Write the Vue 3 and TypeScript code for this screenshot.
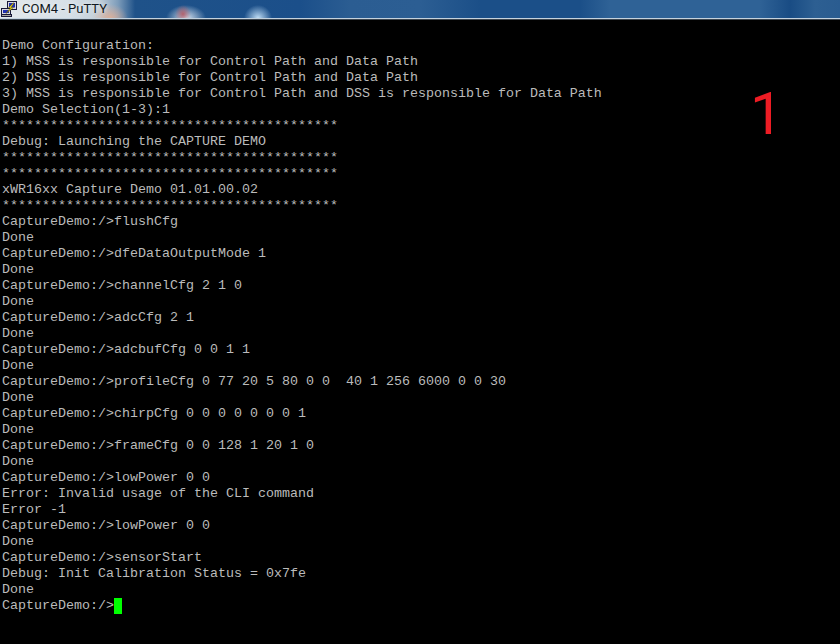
<script setup lang="ts">
const stars = '*'.repeat(42)
const lines: string[] = [
  'Demo Configuration:',
  '1) MSS is responsible for Control Path and Data Path',
  '2) DSS is responsible for Control Path and Data Path',
  '3) MSS is responsible for Control Path and DSS is responsible for Data Path',
  'Demo Selection(1-3):1',
  stars,
  'Debug: Launching the CAPTURE DEMO',
  stars,
  stars,
  'xWR16xx Capture Demo 01.01.00.02',
  stars,
  'CaptureDemo:/>flushCfg',
  'Done',
  'CaptureDemo:/>dfeDataOutputMode 1',
  'Done',
  'CaptureDemo:/>channelCfg 2 1 0',
  'Done',
  'CaptureDemo:/>adcCfg 2 1',
  'Done',
  'CaptureDemo:/>adcbufCfg 0 0 1 1',
  'Done',
  'CaptureDemo:/>profileCfg 0 77 20 5 80 0 0  40 1 256 6000 0 0 30',
  'Done',
  'CaptureDemo:/>chirpCfg 0 0 0 0 0 0 0 1',
  'Done',
  'CaptureDemo:/>frameCfg 0 0 128 1 20 1 0',
  'Done',
  'CaptureDemo:/>lowPower 0 0',
  'Error: Invalid usage of the CLI command',
  'Error -1',
  'CaptureDemo:/>lowPower 0 0',
  'Done',
  'CaptureDemo:/>sensorStart',
  'Debug: Init Calibration Status = 0x7fe',
  'Done',
]
</script>

<template>
  <div class="window">
    <header class="titlebar">
      <svg class="icon" width="16" height="16" viewBox="0 0 16 16">
        <rect x="6.5" y="0.5" width="9" height="8" fill="#d8d8e0" stroke="#181838" />
        <rect x="8" y="2" width="6" height="4.5" fill="#2030b0" />
        <rect x="0.5" y="7.5" width="9" height="6" fill="#d8d8e0" stroke="#181838" />
        <rect x="2" y="9" width="6" height="3" fill="#2030b0" />
        <rect x="0.5" y="13.5" width="10" height="2" fill="#a8a8a0" stroke="#181838" />
        <path d="M12 2 L7.5 7 L9.5 7 L5 12.5 L12.5 6.5 L10 6.5 L13 2 Z" fill="#ffe81a" stroke="#4a4200" stroke-width="0.5" />
      </svg>
      <span class="title">COM4 - PuTTY</span>
    </header>
    <main class="terminal">
      <div v-for="(line, i) in lines" :key="i" class="line">{{ line }}</div>
      <div class="line">CaptureDemo:/&gt;<span class="cursor"></span></div>
      <span class="marker">1</span>
    </main>
  </div>
</template>

<style scoped>
.window {
  width: 840px;
  height: 644px;
  display: flex;
  flex-direction: column;
  overflow: hidden;
  background: #000;
}
.titlebar {
  height: 18px;
  flex: none;
  display: flex;
  align-items: center;
  gap: 5px;
  padding-left: 1px;
  border-bottom: 1px solid #c4d2de;
  box-shadow: 0 1px 0 #3c4650;
  position: relative;
  z-index: 1;
  background:
    radial-gradient(ellipse 8px 9px at 183px 14px, rgba(180, 90, 100, 0.9), transparent),
    radial-gradient(ellipse 20px 13px at 186px 18px, rgba(225, 235, 245, 0.95), transparent),
    radial-gradient(ellipse 14px 13px at 258px 18px, rgba(190, 220, 245, 1), transparent),
    radial-gradient(ellipse 18px 14px at 110px 18px, rgba(225, 175, 150, 0.9), transparent),
    linear-gradient(90deg, #e4e9ec 0, #d6dfe6 70px, #c2cfd9 100px, #7d9cba 118px, #1f5289 135px, #1b4f8a 300px, #2b5d92 350px, #2c5e93 420px, #1b4f88 480px, #1b4f88 580px, #2f6296 610px, #2f6296 760px, #194c84 790px, #2d5f92 815px, #2a5c90 840px);
}
.icon {
  flex: none;
}
.title {
  font: 13px/18px Roboto, "Liberation Sans", sans-serif;
  color: #101820;
  text-shadow: 0 0 4px rgba(255, 255, 255, 0.8);
}
.terminal {
  flex: 1;
  position: relative;
  padding: 19px 0 0 2px;
  background: #000;
  font: 13.33px/16px "Liberation Mono", "Courier New", monospace;
  color: #bbb;
}
.line {
  height: 16px;
  white-space: pre;
}
.cursor {
  display: inline-block;
  width: 8px;
  height: 16px;
  background: #00ff00;
  vertical-align: top;
}
.marker {
  position: absolute;
  left: 750px;
  top: 59px;
  font: 59px/72px Roboto, "Open Sans", sans-serif;
  color: #ed1c24;
}
</style>
